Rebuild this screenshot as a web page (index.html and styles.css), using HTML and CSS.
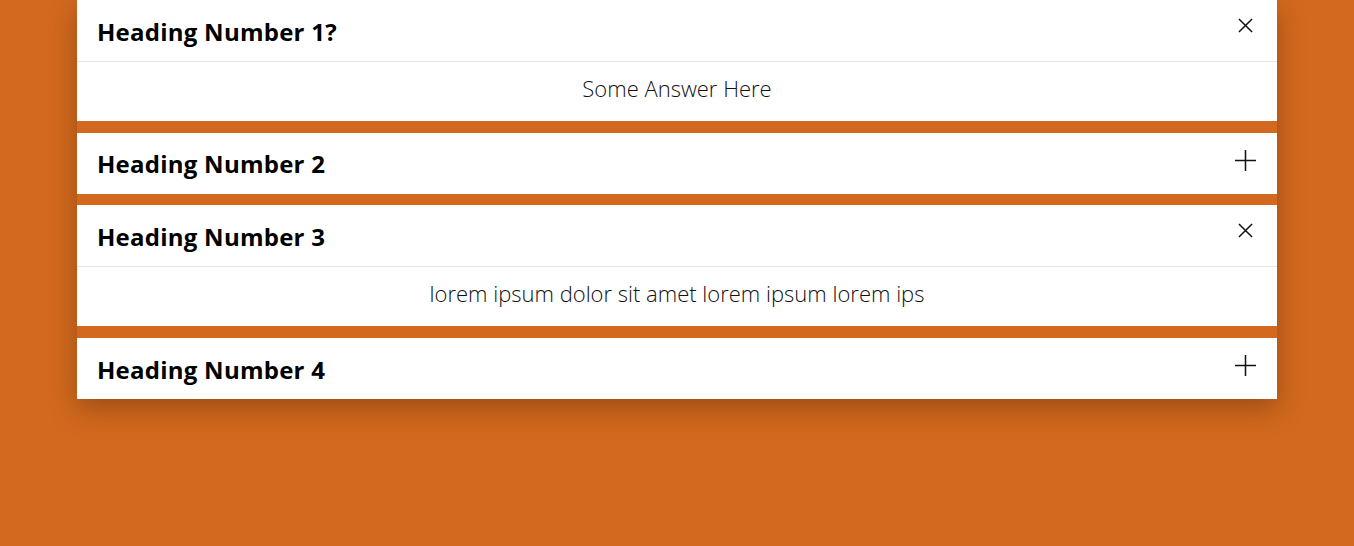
FILE: index.html
```html
<!DOCTYPE html>
<html>
<head>
<meta charset="utf-8">
<link rel="stylesheet" href="styles.css">
</head>
<body>
<div class="accordion">
  <div class="item open">
    <div class="head"><h3 class="title">Heading Number 1?</h3>
      <svg class="icon close" viewBox="0 0 16 16"><path d="M1 1L15 15M15 1L1 15"/></svg></div>
    <div class="body">Some Answer Here</div>
  </div>
  <div class="item">
    <div class="head"><h3 class="title">Heading Number 2</h3>
      <svg class="icon plus" viewBox="0 0 22 22"><path d="M11 0V22M0 11H22"/></svg></div>
  </div>
  <div class="item open">
    <div class="head"><h3 class="title">Heading Number 3</h3>
      <svg class="icon close" viewBox="0 0 16 16"><path d="M1 1L15 15M15 1L1 15"/></svg></div>
    <div class="body">lorem ipsum dolor sit amet lorem ipsum lorem ips</div>
  </div>
  <div class="item">
    <div class="head"><h3 class="title">Heading Number 4</h3>
      <svg class="icon plus" viewBox="0 0 22 22"><path d="M11 0V22M0 11H22"/></svg></div>
  </div>
</div>
</body>
</html>
```
FILE: styles.css
```css
html, body {
  margin: 0;
  padding: 0;
  background: #d2691e;
  height: 100%;
}
body {
  font-family: "Open Sans", "Noto Sans", sans-serif;
}
.accordion {
  width: 1200px;
  margin: 0 auto;
  display: flex;
  flex-direction: column;
  gap: 11.7px;
  box-shadow: 0 10px 25px rgba(60, 30, 10, 0.35);
}
.item {
  background: #fff;
}
.head {
  height: 61px;
  display: flex;
  align-items: center;
  justify-content: space-between;
  padding: 0 21px 0 20px;
  box-sizing: border-box;
}
.title {
  margin: 0;
  font-size: 24px;
  font-weight: 700;
  color: #000;
  padding-top: 1px;
  letter-spacing: 0.25px;
}
.icon {
  fill: none;
  stroke: #111;
  align-self: flex-start;
}
.close {
  width: 15px;
  height: 15px;
  margin-top: 18px;
  margin-right: 3px;
  stroke-width: 1.6;
}
.plus {
  width: 21px;
  height: 21px;
  margin-top: 17px;
  stroke-width: 1.6;
}
.body {
  border-top: 1px solid #e5e5e5;
  height: 60px;
  display: flex;
  align-items: center;
  justify-content: center;
  font-size: 22px;
  font-weight: 300;
  color: #111;
  padding-bottom: 8px;
  box-sizing: border-box;
}
```
